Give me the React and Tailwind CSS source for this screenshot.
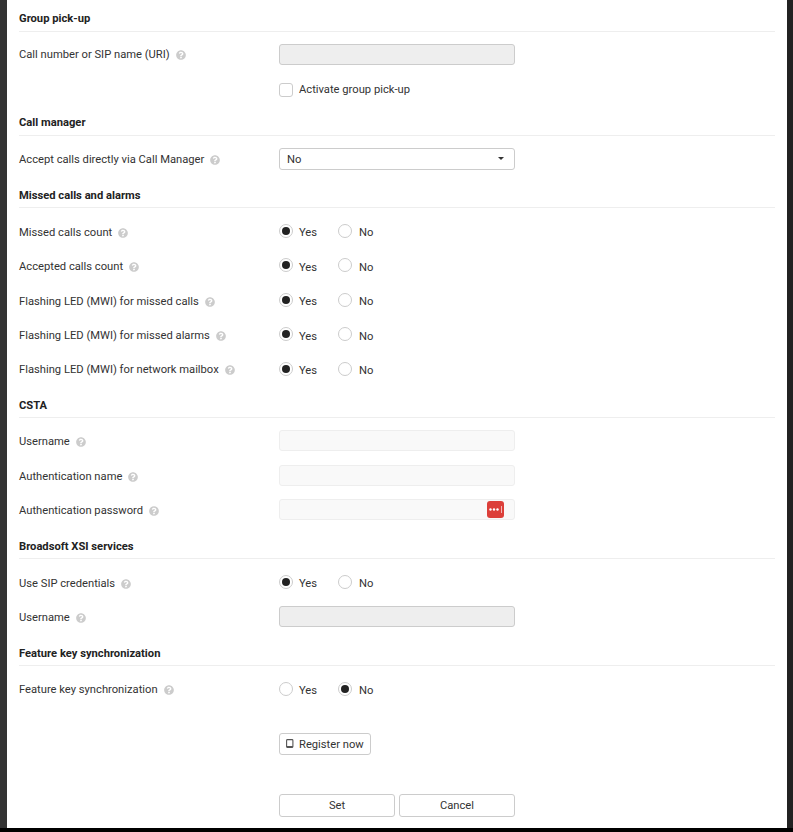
import React from "react";
import { FaQuestionCircle } from "react-icons/fa";

function Help() {
  return <FaQuestionCircle className="ml-[6px] text-[#cccccc] mt-[-1px]" size={10} />;
}

function Heading({ tight, children }) {
  return (
    <div
      className={
        tight
          ? "h-6 border-b border-[#eeeeee] font-bold text-[#222222] leading-[22px]"
          : "h-6 border-b border-[#eeeeee] font-bold text-[#222222] leading-[23px]"
      }
    >
      {children}
    </div>
  );
}

function Row({ label, short, low, high, children }) {
  const labelClass = low
    ? "flex w-[260px] items-center pt-[4px]"
    : high
      ? "flex w-[260px] items-center"
      : "flex w-[260px] items-center pt-[2px]";
  return (
    <div className={short ? "flex h-[32.5px] items-center" : "flex h-[34.5px] items-center"}>
      <div className={labelClass}>
        {label}
        <Help />
      </div>
      {children}
    </div>
  );
}

function Radio({ checked, label, wide }) {
  return (
    <div className={wide ? "flex items-center mr-[21px]" : "flex items-center"}>
      <span className="flex h-[14px] w-[14px] items-center justify-center rounded-full border border-[#cccccc] bg-white mt-[-3px]">
        {checked && <span className="h-2 w-2 rounded-full bg-[#222222]" />}
      </span>
      <span className={wide ? "ml-[6px] mt-[3px]" : "ml-[7px] mt-[3px]"}>{label}</span>
    </div>
  );
}

function YesNo({ value = "yes" }) {
  return (
    <div className="flex">
      <Radio checked={value === "yes"} label="Yes" wide />
      <Radio checked={value === "no"} label="No" />
    </div>
  );
}

function Disabled() {
  return <div className="h-[21px] w-[236px] rounded-[3px] border border-[#cccccc] bg-[#eeeeee]" />;
}

function Light({ children }) {
  return (
    <div className="relative h-[21px] w-[236px] rounded-[3px] border border-[#eeeeee] bg-[#f9f9f9]">{children}</div>
  );
}

export default function App() {
  return (
    <div
      className="h-[832px] w-[793px] overflow-hidden bg-black text-[11.2px] text-[#333333]"
      style={{ fontFamily: "Roboto, sans-serif" }}
    >
      <div className="flex h-[828px]">
        <div className="w-[7px] bg-[#333333]" />
        <div className="w-[780px] bg-white px-3 pt-2">
          <Heading tight>Group pick-up</Heading>
          <div className="mt-[5px]">
            <Row label="Call number or SIP name (URI)">
              <Disabled />
            </Row>
            <div className="flex h-[17px] items-center pl-[260px] mt-[10px]">
              <span className="h-[14px] w-[14px] rounded-[3px] border border-[#cccccc] bg-white" />
              <span className="ml-[6px]">Activate group pick-up</span>
            </div>
          </div>

          <div className="mt-[13px]">
            <Heading tight>Call manager</Heading>
          </div>
          <div className="mt-[6px]">
            <Row label="Accept calls directly via Call Manager" low>
              <div className="flex h-[22px] w-[236px] items-center justify-between rounded-[3px] border border-[#cccccc] bg-white pl-[7px] pr-[10px]">
                <span className="pt-[3px]">No</span>
                <span className="h-0 w-0 border-x-[3px] border-t-[3px] border-x-transparent border-t-[#333333]" />
              </div>
            </Row>
          </div>

          <div className="mt-[8px]">
            <Heading>Missed calls and alarms</Heading>
          </div>
          <div className="mt-[7px]">
            <Row label="Missed calls count"><YesNo /></Row>
            <Row label="Accepted calls count"><YesNo /></Row>
            <Row label="Flashing LED (MWI) for missed calls"><YesNo /></Row>
            <Row label="Flashing LED (MWI) for missed alarms"><YesNo /></Row>
            <Row label="Flashing LED (MWI) for network mailbox" high><YesNo /></Row>
          </div>

          <div className="mt-[6.5px]">
            <Heading>CSTA</Heading>
          </div>
          <div className="mt-[5.5px]">
            <Row label="Username" low><Light /></Row>
            <Row label="Authentication name" low><Light /></Row>
            <Row label="Authentication password" low>
              <Light>
                <svg className="absolute right-[10px] top-[1px]" width="17" height="17" viewBox="0 0 17 17">
                  <rect width="17" height="17" rx="3" fill="#dc3f3a" />
                  <circle cx="3.5" cy="8.5" r="1.2" fill="#fff" />
                  <circle cx="7" cy="8.5" r="1.2" fill="#fff" />
                  <circle cx="10.5" cy="8.5" r="1.2" fill="#fff" />
                  <rect x="14" y="5" width="0.9" height="7" fill="#f5c6c3" />
                </svg>
              </Light>
            </Row>
          </div>

          <div className="mt-[8px]">
            <Heading>Broadsoft XSI services</Heading>
          </div>
          <div className="mt-[8px]">
            <Row label="Use SIP credentials" short><YesNo /></Row>
            <Row label="Username" low><Disabled /></Row>
          </div>

          <div className="mt-[8px]">
            <Heading>Feature key synchronization</Heading>
          </div>
          <div className="mt-[7px]">
            <Row label="Feature key synchronization" high><YesNo value="no" /></Row>
          </div>

          <div className="pl-[260px]">
            <div className="mt-[25px] flex h-[22px] w-[92px] items-center rounded-[3px] border border-[#cccccc] bg-white pl-[6px]">
              <svg width="8" height="9" viewBox="0 0 8 9" fill="none">
                <rect x="0.6" y="0.6" width="6.3" height="7.8" rx="0.8" stroke="#555" strokeWidth="1.1" />
                <rect x="0.6" y="7" width="6.3" height="1.4" fill="#555" />
              </svg>
              <span className="ml-[5px] pt-[3px]">Register now</span>
            </div>
            <div className="mt-[39px] flex gap-[4px]">
              <div className="flex h-[23px] w-[116px] items-center justify-center rounded-[3px] border border-[#cccccc] bg-white pt-[3px]">Set</div>
              <div className="flex h-[23px] w-[116px] items-center justify-center rounded-[3px] border border-[#cccccc] bg-white pt-[3px]">Cancel</div>
            </div>
          </div>
        </div>
        <div className="w-[6px] bg-[#222222]" />
      </div>
    </div>
  );
}
